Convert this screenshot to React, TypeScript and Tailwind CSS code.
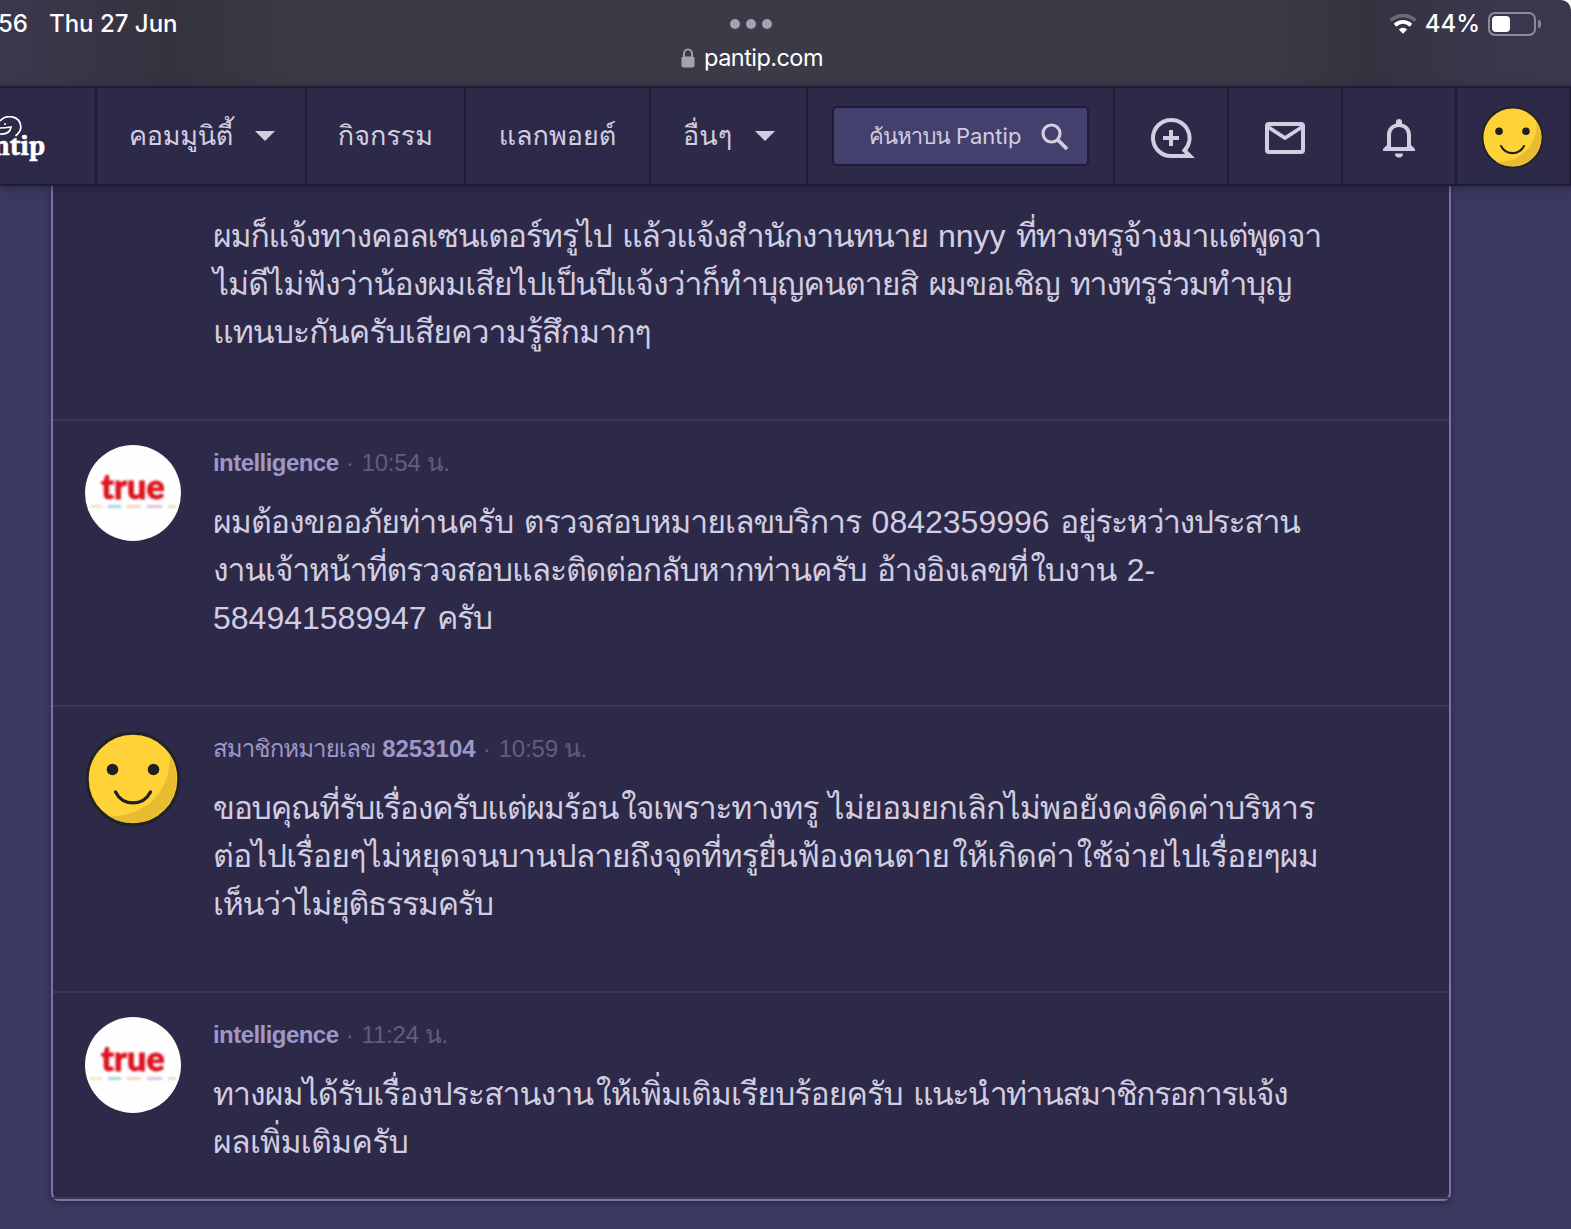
import type { ReactNode } from "react"
import clsx from "clsx"

interface Line {
  text: string
  // one class per space-separated word
  tracking: string[]
}

interface Comment {
  author: ReactNode
  time: string
  avatar: "true" | "smile" | null
  lines: Line[]
  height: string
}

const comments: Comment[] = [
  {
    author: null,
    time: "",
    avatar: null,
    height: "h-[235px]",
    lines: [
      {
        text: "ผมก็แจ้งทางคอลเซนเตอร์ทรูไป แล้วแจ้งสำนักงานทนาย nnyy ที่ทางทรูจ้างมาแต่พูดจา",
        tracking: ["tracking-[-1.21px]", "tracking-[-1.35px]", "", "tracking-[-1.2px]"],
      },
      {
        text: "ไม่ดีไม่ฟังว่าน้องผมเสียไปเป็นปีแจ้งว่าก็ทำบุญคนตายสิ ผมขอเชิญ ทางทรูร่วมทำบุญ",
        tracking: ["tracking-[-0.98px]", "tracking-[-1.4px]", "tracking-[-1.35px]"],
      },
      { text: "แทนบะกันครับเสียความรู้สึกมากๆ", tracking: ["tracking-[-0.95px]"] },
    ],
  },
  {
    author: <b className="tracking-[-0.55px]">intelligence</b>,
    time: "10:54 น.",
    avatar: "true",
    height: "h-[286px]",
    lines: [
      {
        text: "ผมต้องขออภัยท่านครับ ตรวจสอบหมายเลขบริการ 0842359996 อยู่ระหว่างประสาน",
        tracking: ["tracking-[-0.95px]", "tracking-[-1.03px]", "", "tracking-[-1.4px]"],
      },
      {
        text: "งานเจ้าหน้าที่ตรวจสอบและติดต่อกลับหากท่านครับ อ้างอิงเลขที่ใบงาน 2-",
        tracking: ["tracking-[-1.17px]", "tracking-[-1.15px]", ""],
      },
      { text: "584941589947 ครับ", tracking: ["", "tracking-[-1.4px]"] },
    ],
  },
  {
    author: (
      <>
        <span className="tracking-[-0.9px]">สมาชิกหมายเลข</span> <b>8253104</b>
      </>
    ),
    time: "10:59 น.",
    avatar: "smile",
    height: "h-[286px]",
    lines: [
      {
        text: "ขอบคุณที่รับเรื่องครับแต่ผมร้อนใจเพราะทางทรู ไม่ยอมยกเลิกไม่พอยังคงคิดค่าบริหาร",
        tracking: ["tracking-[-1.24px]", "tracking-[-0.83px]"],
      },
      {
        text: "ต่อไปเรื่อยๆไม่หยุดจนบานปลายถึงจุดที่ทรูยื่นฟ้องคนตายให้เกิดค่าใช้จ่ายไปเรื่อยๆผม",
        tracking: ["tracking-[-0.79px]"],
      },
      { text: "เห็นว่าไม่ยุติธรรมครับ", tracking: ["tracking-[-1.3px]"] },
    ],
  },
  {
    author: <b className="tracking-[-0.55px]">intelligence</b>,
    time: "11:24 น.",
    avatar: "true",
    height: "h-[206px]",
    lines: [
      {
        text: "ทางผมได้รับเรื่องประสานงานให้เพิ่มเติมเรียบร้อยครับ แนะนำท่านสมาชิกรอการแจ้ง",
        tracking: ["tracking-[-0.97px]", "tracking-[-1.6px]"],
      },
      { text: "ผลเพิ่มเติมครับ", tracking: ["tracking-[-0.73px]"] },
    ],
  },
]

// Thai words are tightened and the vowel ใ gets some air on its left.
function ThaiText({ line }: { line: Line }) {
  return line.text.split(" ").map((word, i) => (
    <span key={i}>
      {i > 0 && <span className="[word-spacing:1.5px]"> </span>}
      <span className={line.tracking[i]}>
        {word.split(/(ใ)/).map((part, j) => (
          <span key={j} className={part === "ใ" ? "ml-[3px]" : undefined}>
            {part}
          </span>
        ))}
      </span>
    </span>
  ))
}

function Smile({ className }: { className?: string }) {
  return (
    <svg viewBox="0 0 96 96" className={className}>
      <circle cx="48" cy="48" r="45.8" fill="#ffd237" stroke="#222327" strokeWidth="3" />
      <path d="M84.500 23.500A44.3 44.3 0 0 1 24 85.3C60 86 87 60 84.500 23.500Z" fill="#e8bb31" />
      <circle cx="27.500" cy="38.500" r="5.800" fill="#1f2024" />
      <circle cx="68.500" cy="38.500" r="5.800" fill="#1f2024" />
      <path d="M30.500 61C38 75.500 58 75.500 65.500 61" fill="none" stroke="#1f2024" strokeWidth="3.200" strokeLinecap="round" />
    </svg>
  )
}

function TrueLogo() {
  return (
    <div className="flex size-24 flex-col items-center overflow-hidden rounded-full bg-[#fefefe]">
      <span className="mt-[23px] h-9 font-['Lato'] text-[34px] leading-9 font-black tracking-[0.2px] text-[#dc1420] blur-[0.8px] [-webkit-text-stroke:0.8px_#dc1420]">
        true
      </span>
      <div className="mt-[1px] flex gap-[6px] opacity-70 blur-[1px]">
        <i className="h-[3px] w-[12px] bg-[#e5dfa8]" />
        <i className="h-[3px] w-[13px] bg-[#86c5cd]" />
        <i className="h-[3px] w-[14px] bg-[#f0c3a4]" />
        <i className="h-[3px] w-[15px] bg-[#d3a5d0]" />
        <i className="h-[3px] w-[8px] bg-[#cfdcab]" />
      </div>
    </div>
  )
}

function StatusBar() {
  return (
    <div className="bg-white">
      <div className="flex h-[86px] justify-between rounded-tr-[10px] bg-[linear-gradient(90deg,#3b384e_0%,#363441_9%,#35333f_11%,#3c3a47_20%,#3c3a47_80%,#35333f_87%,#3a374c_95%,#3b384e_100%)]">
        <div className="flex h-12 w-[500px] items-center font-['Inter'] text-[24px] font-medium text-white">
          <span className="-ml-[2px] w-[51px]">56</span>
          <span>Thu 27 Jun</span>
        </div>
        <div className="flex flex-col items-center">
          <div className="mt-[19px] flex gap-[6px]">
            <i className="size-[10px] rounded-full bg-[#a5a1b1]" />
            <i className="size-[10px] rounded-full bg-[#a5a1b1]" />
            <i className="size-[10px] rounded-full bg-[#a5a1b1]" />
          </div>
          <div className="mt-[14px] flex items-center gap-[9px] pl-[2px] font-['Inter'] text-[23.500px] leading-[30px] tracking-[-0.55px] text-white">
            <svg viewBox="0 0 14 20" className="h-5 w-[14px] text-[#a5a1b1]">
              <rect x="0.500" y="8.500" width="13" height="11" rx="2" fill="currentColor" />
              <path d="M3 9V6a4 4.600 0 0 1 8 0v3" fill="none" stroke="currentColor" strokeWidth="1.900" />
            </svg>
            <span>pantip.com</span>
          </div>
        </div>
        <div className="flex h-12 w-[569px] items-center justify-end pr-[30px] font-['Inter'] text-[24px] font-medium text-white">
          <svg viewBox="0 0 28 20" className="mr-[8px] h-5 w-7">
            <path d="M1.500 6.500C9 0 19 0 26.500 6.500" fill="none" stroke="#6c6978" strokeWidth="3.600" />
            <path d="M6 11.200C11 6.800 17 6.800 22 11.200" fill="none" stroke="white" strokeWidth="3.800" />
            <path d="M9.800 15.500C12.500 13.300 15.500 13.300 18.200 15.500L14 19.800Z" fill="white" />
          </svg>
          <span>44%</span>
          <div className="ml-[8px] h-6 w-12 rounded-[7px] border-2 border-[#8d8a99] p-[2px]">
            <div className="h-4 w-[18px] rounded-[4px] bg-white" />
          </div>
          <i className="ml-[2px] h-2 w-[3px] rounded-r-full bg-[#8d8a99]" />
        </div>
      </div>
    </div>
  )
}

function Caret() {
  return (
    <svg viewBox="0 0 20 10" className="h-[10px] w-5 fill-[#d2cde0]">
      <path d="M0 0h20L10 10z" />
    </svg>
  )
}

function Cell({ className, children }: { className?: string; children?: ReactNode }) {
  return (
    <div className={clsx("flex h-24 shrink-0 items-center border-r-2 border-[#1f1c35]", className)}>{children}</div>
  )
}

function NavBar() {
  return (
    <nav className="relative z-10 flex h-[100px] border-y-2 border-[#1f1c35] bg-[#2d2a49] text-[27px] text-[#d2cde0] shadow-[0_2px_8px_rgba(25,22,45,0.5)]">
      <Cell className="w-[97px]">
        <div className="relative">
          <svg viewBox="0 0 22 22" className="absolute top-[6px] left-0 size-[22px] fill-none stroke-white" strokeWidth="1.700">
            <path d="M0 5C6-2 20-1 20.800 11C21 15 18 18 15.500 20M0 12c4 0 8-.500 11-1-1 6-5 7.500-11 7M4 8h2" />
          </svg>
          <span className="-ml-[7px] block pt-[20px] font-serif text-[28px] leading-8 font-bold text-white [-webkit-text-stroke:0.6px_white]">
            ntip
          </span>
        </div>
      </Cell>
      <Cell className="w-[210px] justify-between pr-[30px] pl-8">
        <span className="tracking-[-0.3px]">คอมมูนิตี้</span>
        <Caret />
      </Cell>
      <Cell className="w-[159px] justify-center">กิจกรรม</Cell>
      <Cell className="w-[185px] justify-center">แลกพอยต์</Cell>
      <Cell className="w-[157px] justify-between pr-[31px] pl-8">
        <span>อื่นๆ</span>
        <Caret />
      </Cell>
      <Cell className="w-[307px] pl-6">
        <div className="flex h-[60px] w-[257px] items-center rounded-[5px] border-2 border-[#1f1c35] bg-[#44406e] pl-[35px] text-[22px]">
          <span className="w-[155px] whitespace-nowrap">
            <span className="tracking-[-0.8px]">ค้นหาบน</span> <span className="font-['Inter']">Pantip</span>
          </span>
          <svg viewBox="0 0 28 28" className="mt-[2px] ml-[17px] size-7 fill-none stroke-[#d2cde0]" strokeWidth="3.200">
            <circle cx="10.500" cy="10.500" r="8.500" />
            <path d="M16.500 16.500L26 26" strokeWidth="3.800" />
          </svg>
        </div>
      </Cell>
      <Cell className="w-[114px] justify-center pl-1">
        <svg viewBox="0 0 44 40" className="mt-1 h-10 w-11 fill-none stroke-[#d2cde0]" strokeWidth="4">
          <path d="M20 2A18 18 0 0 0 20 38H39L33.500 32.500A18 18 0 0 0 20 2Z" />
          <path d="M20 12v16M12 20h16" />
        </svg>
      </Cell>
      <Cell className="w-[114px] justify-center">
        <svg viewBox="0 0 40 32" className="mt-1 h-8 w-10 fill-none stroke-[#d2cde0]" strokeWidth="4">
          <rect x="2" y="2" width="36" height="28" rx="2" />
          <path d="M3 5l17 11L37 5" strokeWidth="3.800" />
        </svg>
      </Cell>
      <Cell className="w-[114px] justify-center">
        <svg viewBox="0 0 32 40" className="mt-1 h-10 w-8 fill-[#d2cde0]">
          <path d="M16 1a3 3 0 0 0-3 3v1.500C7.500 7 4 11 4 17v10L0 31v2h32v-2l-4-4V17c0-6-3.500-10-9-11.500V4a3 3 0 0 0-3-3zm0 8c5 0 8 3.500 8 8.500V29H8V17.500C8 12.500 11 9 16 9zM12 35.500h8a4 4 0 0 1-8 0z" />
        </svg>
      </Cell>
      <Cell className="w-[114px] justify-center">
        <Smile className="mt-[3px] mr-[1px] size-[63px]" />
      </Cell>
    </nav>
  )
}

function CommentItem({ comment }: { comment: Comment }) {
  return (
    <article className={clsx("flex border-b-2 border-[#3b3756] pl-8", comment.height)}>
      <div className="w-32 shrink-0 pt-6">
        {comment.avatar === "true" && <TrueLogo />}
        {comment.avatar === "smile" && <Smile className="size-24" />}
      </div>
      <div className="text-[32px] text-[#d2cde0]">
        {comment.author && (
          <p className="mt-6 h-9 text-[24px] leading-9 whitespace-pre text-[#625d7d]">
            <span className="text-[#9f97c6]">{comment.author}</span>
            <span className="tracking-[0.6px]">{" · "}</span>
            <span className="tracking-[-0.2px]">{comment.time}</span>
          </p>
        )}
        <div className={comment.author ? "mt-[17px]" : "mt-[26px]"}>
          {comment.lines.map((line) => (
            <p key={line.text} className="h-12 leading-[48px] whitespace-pre">
              <ThaiText line={line} />
            </p>
          ))}
        </div>
      </div>
    </article>
  )
}

export default function App() {
  return (
    <div className="h-[1229px] w-[1571px] overflow-hidden bg-[#3c3960] font-['Liberation_Sans','Thonburi','Loma','Garuda','Waree','Umpush','Noto_Sans_Thai_Looped','Noto_Serif_Thai','FreeSans',sans-serif]">
      <StatusBar />
      <NavBar />
      <main className="ml-[51px] w-[1400px] rounded-b-lg border-2 border-t-0 border-[#7c75a0] bg-[#2d2a49] shadow-[0_2px_6px_rgba(25,22,45,0.5)]">
        {comments.map((comment, i) => (
          <CommentItem key={i} comment={comment} />
        ))}
      </main>
    </div>
  )
}
